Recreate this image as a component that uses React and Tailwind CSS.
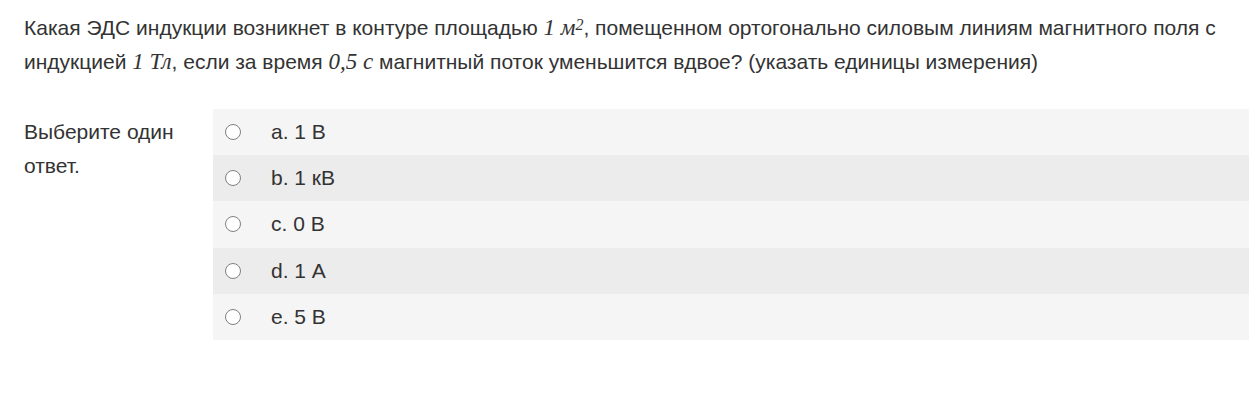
import React from 'react';

const OPTIONS = [
  { id: 'a', label: 'a. 1 В' },
  { id: 'b', label: 'b. 1 кВ' },
  { id: 'c', label: 'c. 0 В' },
  { id: 'd', label: 'd. 1 А' },
  { id: 'e', label: 'e. 5 В' },
];

// MathJax-style inline math
const M = ({ children }) => (
  <span className="italic text-[23px] font-['Liberation_Serif',serif]">{children}</span>
);

const App = () => {
  return (
    <div className="w-[1249px] h-[408px] bg-white text-[#333333] text-[21px] leading-[34px] font-['Liberation_Sans',Arial,sans-serif] overflow-hidden">
      <div className="pl-6 pr-[20px] pt-[11px]">
        Какая ЭДС индукции возникнет в контуре площадью <M>1 м<sup className="text-[16px] relative -top-[5px]">2</sup></M>, помещенном ортогонально силовым линиям магнитного поля с индукцией <M>1 Тл</M>, если за время <M>0,5 с</M> магнитный поток уменьшится вдвое? (указать единицы измерения)
      </div>

      <div className="flex mt-[30px]">
        <div className="w-[213px] shrink-0 pl-6 pr-4 pt-[6px]">Выберите один ответ.</div>
        <div className="flex-1 flex flex-col">
          {OPTIONS.map((opt, i) => (
            <div
              key={opt.id}
              className={`flex items-center h-[46.2px] ${i % 2 === 0 ? 'bg-[#f5f5f5]' : 'bg-[#ececec]'}`}
            >
              <div className="w-[58px] pl-[12px]">
                <span className="block w-[16px] h-[16px] rounded-full border border-[#808080] bg-white" />
              </div>
              <span>{opt.label}</span>
            </div>
          ))}
        </div>
      </div>
    </div>
  );
};

export default App;
